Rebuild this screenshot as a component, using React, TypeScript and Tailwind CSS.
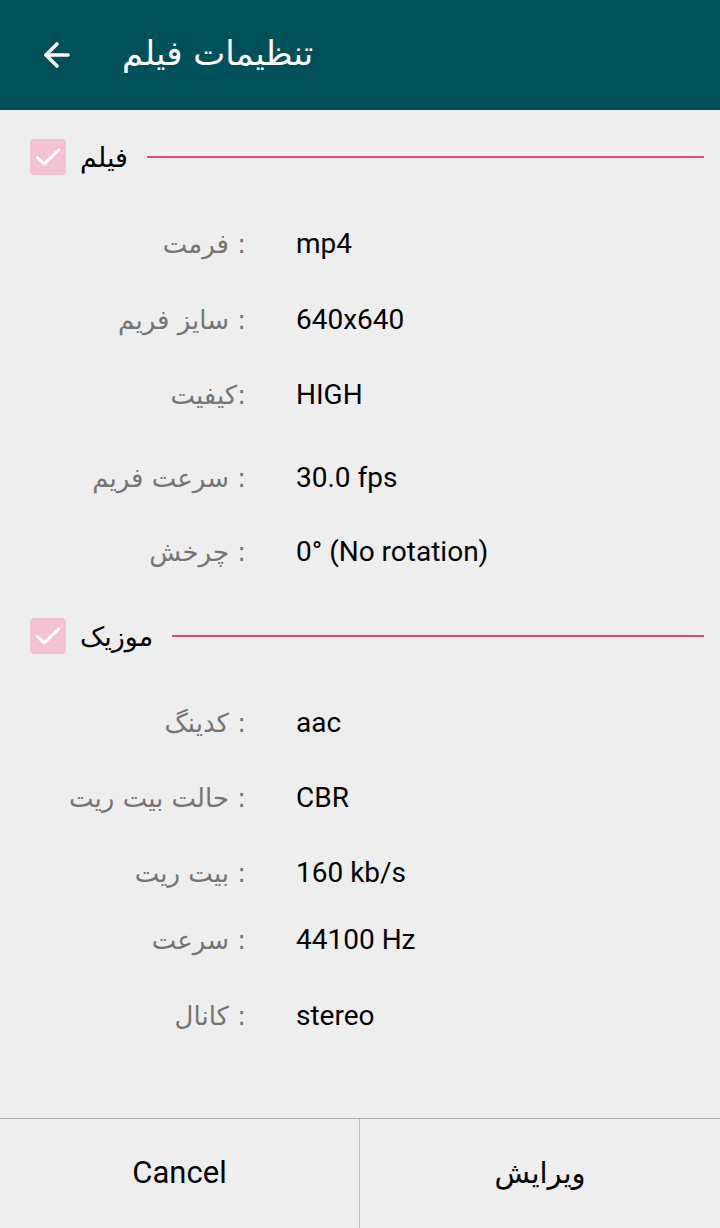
import { ArrowLeft } from 'lucide-react';

const fa = { fontFamily: '"DejaVu Sans", sans-serif' };
const en = { fontFamily: 'Roboto, "Liberation Sans", sans-serif' };

type Row = { label: string; value: string; mt: string };

const film: Row[] = [
  { label: 'فرمت :', value: 'mp4', mt: 'mt-[43px]' },
  { label: 'سایز فریم :', value: '640x640', mt: 'mt-[36px]' },
  { label: 'کیفیت:', value: 'HIGH', mt: 'mt-[35px]' },
  { label: 'سرعت فریم :', value: '30.0 fps', mt: 'mt-[43px]' },
  { label: 'چرخش :', value: '0° (No rotation)', mt: 'mt-[34px]' },
];

const music: Row[] = [
  { label: 'کدینگ :', value: 'aac', mt: 'mt-[43px]' },
  { label: 'حالت بیت ریت :', value: 'CBR', mt: 'mt-[35px]' },
  { label: 'بیت ریت :', value: '160 kb/s', mt: 'mt-[35px]' },
  { label: 'سرعت :', value: '44100 Hz', mt: 'mt-[27px]' },
  { label: 'کانال :', value: 'stereo', mt: 'mt-[36px]' },
];

function SectionHeader({ title, mt }: { title: string; mt: string }) {
  return (
    <div className={`flex items-center h-[48px] pl-[30px] pr-4 ${mt}`}>
      <div className="w-[36px] h-[36px] rounded-[4px] bg-[#f4c3d2] flex items-center justify-center">
        <svg width="30" height="30" viewBox="0 0 24 24" fill="none" stroke="white" strokeWidth="2.4" strokeLinecap="round" strokeLinejoin="round">
          <path d="M3.5 12.5l5.5 5L20.5 6.5" />
        </svg>
      </div>
      <span dir="rtl" className="ml-[14px] text-[27px] text-black leading-none" style={fa}>{title}</span>
      <div className="flex-1 ml-[19px] h-[2px] bg-[#e44a7f]" />
    </div>
  );
}

function InfoRow({ row }: { row: Row }) {
  return (
    <div className={`flex items-center h-[40px] ${row.mt}`}>
      <div dir="ltr" className="w-[246px] text-right text-[26px] text-[#757575] whitespace-nowrap" style={fa}>
        {row.label}
      </div>
      <div className="ml-[50px] text-[28px] text-black" style={en}>{row.value}</div>
    </div>
  );
}

export default function App() {
  return (
    <div className="w-[720px] h-[1228px] bg-[#eeeeee] flex flex-col">
      <div className="h-[110px] bg-[#00505a] flex items-center px-[38px] shrink-0">
        <ArrowLeft className="text-white" size={38} strokeWidth={2.2} />
        <h1 dir="rtl" className="ml-[46px] -mt-[4px] text-white text-[34px]" style={fa}>تنظیمات فیلم</h1>
      </div>

      <div className="flex-1 flex flex-col">
        <SectionHeader title="فیلم" mt="mt-[23px]" />
        {film.map((r) => <InfoRow key={r.label} row={r} />)}
        <SectionHeader title="موزیک" mt="mt-[40px]" />
        {music.map((r) => <InfoRow key={r.label} row={r} />)}
      </div>

      <div className="h-[110px] border-t border-[#aaaaaa] flex shrink-0">
        <button className="w-[359px] flex items-center justify-center text-[31px] text-black" style={en}>
          Cancel
        </button>
        <button dir="rtl" className="flex-1 border-l border-[#bbbbbb] flex items-center justify-center text-[29px] text-black" style={fa}>
          ویرایش
        </button>
      </div>
    </div>
  );
}
